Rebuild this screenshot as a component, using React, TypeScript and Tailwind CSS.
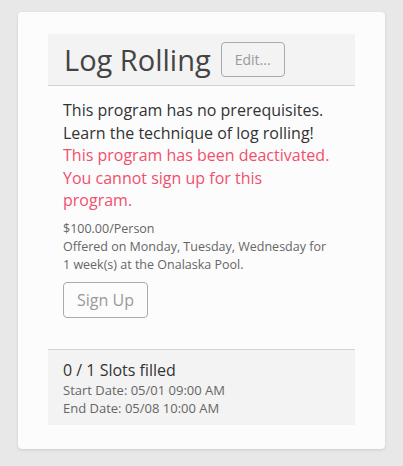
import React from 'react';

const font = { fontFamily: '"Open Sans", "DejaVu Sans", sans-serif' };

export default function App() {
  return (
    <div className="min-h-[466px] w-full bg-[#e8e8e8] px-[18px] pt-[12px] pb-[19px]" style={font}>
      <div className="rounded-[4px] bg-[#fcfcfc] px-[30px] pt-[22px] pb-[24px] shadow-[0_1px_3px_rgba(0,0,0,0.12)]">
        <div className="bg-white">
          <div className="flex h-[52px] items-center gap-[10px] border-b border-[#d3d3d3] bg-[#f3f3f3] px-[16px]">
            <h3 className="text-[29px] leading-[38px] font-normal text-[#444]">Log Rolling</h3>
            <button className="h-[35px] rounded-[4px] border border-[#aaa] px-[13px] text-[14px] text-[#999]">
              Edit...
            </button>
          </div>
          <div className="bg-[#fcfcfc] pl-[15px] pr-[20px] pt-[13px] pb-[31px]">
            <p className="text-[16px] leading-[22.5px] text-[#333]">
              This program has no prerequisites.
              <br />
              Learn the technique of log rolling!
            </p>
            <p className="text-[16px] leading-[22.5px] text-[#f0506e]">
              This program has been deactivated. You cannot sign up for this program.
            </p>
            <div className="mt-[8px] text-[12.5px] leading-[18px] text-[#666]">
              <div>$100.00/Person</div>
              <div>Offered on Monday, Tuesday, Wednesday for 1 week(s) at the Onalaska Pool.</div>
            </div>
            <button className="mt-[8px] h-[36px] rounded-[4px] border border-[#aaa] px-[13px] text-[16px] text-[#999]">
              Sign Up
            </button>
          </div>
          <div className="border-t border-[#d3d3d3] bg-[#f3f3f3] px-[15px] pt-[9px] pb-[8px]">
            <div className="text-[16px] leading-[22px] text-[#333]">0 / 1 Slots filled</div>
            <div className="text-[13px] leading-[18px] text-[#666]">Start Date: 05/01 09:00 AM</div>
            <div className="text-[13px] leading-[18px] text-[#666]">End Date: 05/08 10:00 AM</div>
          </div>
        </div>
      </div>
    </div>
  );
}
